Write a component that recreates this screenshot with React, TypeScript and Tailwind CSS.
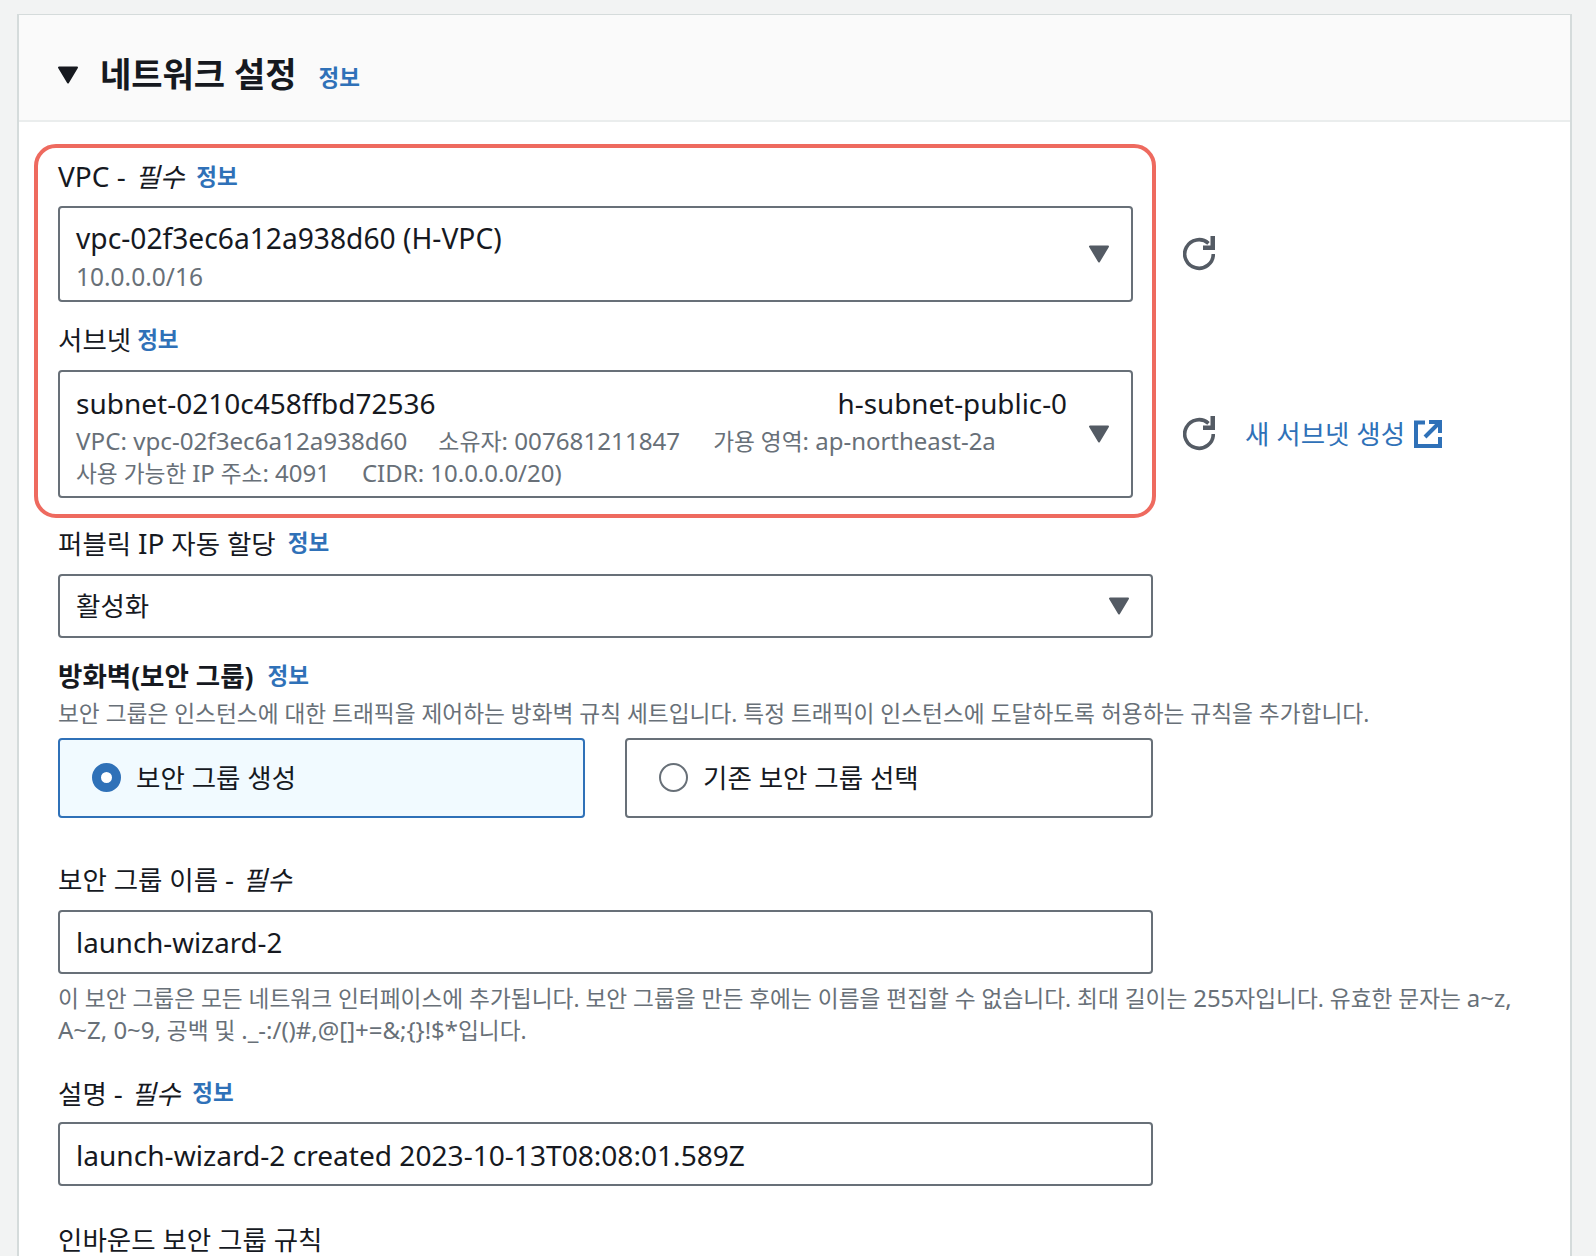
import { ReactNode } from 'react';

// latin runs are a little larger than the hangul around them in the original
const L = ({ children }: { children: ReactNode }) => <span className="text-[1.056em]">{children}</span>;

const Info = ({ className = '' }: { className?: string }) => (
  <span className={`font-bold text-[#2f71b8] text-[22.5px] leading-[32px] ${className}`}>정보</span>
);

const Caret = ({ dark = false }: { dark?: boolean }) => (
  <svg viewBox="0 0 22 20" className="w-[22px] h-[20px] shrink-0">
    <path
      d="M2 2.5h18L11 17.5z"
      fill={dark ? '#16191f' : '#545b64'}
      stroke={dark ? '#16191f' : '#545b64'}
      strokeWidth="2"
      strokeLinejoin="round"
    />
  </svg>
);

const Refresh = () => (
  <svg viewBox="0 0 32 36" className="w-[32px] h-[36px] shrink-0" fill="none">
    <path d="M30.300 18A14.300 14.300 0 1 1 25.500 7.300" stroke="#545b64" strokeWidth="3.600" />
    <path d="M32 0v14H20V9.500h7.500V0z" fill="#545b64" />
  </svg>
);

const ExternalLink = () => (
  <svg viewBox="0 0 28 28" className="w-[28px] h-[28px] shrink-0" fill="none" stroke="#2f71b8" strokeWidth="4">
    <path d="M11 2.500H2v23.500h24v-9" />
    <path d="M15 2h11v11" />
    <path d="M25 3L11 17" />
  </svg>
);

const Box = ({ className = '', children }: { className?: string; children: ReactNode }) => (
  <div className={`border-2 border-[#687078] rounded-[4px] bg-white px-[16px] ${className}`}>{children}</div>
);

export default function App() {
  return (
    <div
      className="h-[1256px] overflow-hidden bg-[#f2f3f3] pt-[14px] pl-[17px] pr-[24px] text-[#16191f] text-[26.5px] leading-[38px]"
      style={{ fontFamily: '"Noto Sans", "Noto Sans CJK KR", sans-serif' }}
    >
      <div className="bg-white border-x-2 border-t border-[#d5dbdb] h-[1300px]">
        {/* Header */}
        <div className="h-[107px] bg-[#fafafa] border-b-2 border-[#eaeded] flex items-center pl-[38px] pt-[14px]">
          <Caret dark />
          <h2 className="ml-[21px] font-bold text-[34px] leading-[44px] mb-[2px]">네트워크 설정</h2>
          <Info className="ml-[22px] mt-[6px]" />
        </div>

        <div className="relative pl-[39px] pt-[36px]">
          {/* highlight drawn over the form */}
          <div className="absolute left-[15px] top-[22px] w-[1122px] h-[374px] border-[4px] border-[#ee6a5f] rounded-[22px] pointer-events-none" />

          <div className="w-[1096px]">
            <div className="flex items-center gap-[12px] h-[38px]">
              <span className="-mt-[2px]">
                <L>VPC -</L> <i className="ml-[3px]">필수</i>
              </span>
              <Info />
            </div>
            <div className="mt-[10px] flex items-center w-[1176px]">
              <Box className="w-[1075px] h-[96px] flex items-center justify-between pr-[21px]">
                <div className="pt-[4px]">
                  <div className="text-[28.2px] leading-[40px]">vpc-02f3ec6a12a938d60 (H-VPC)</div>
                  <div className="text-[24.5px] leading-[37px] text-[#687078]">10.0.0.0/16</div>
                </div>
                <Caret />
              </Box>
              <div className="ml-[50px]">
                <Refresh />
              </div>
            </div>

            <div className="mt-[19px] flex items-center gap-[6px] h-[38px]">
              <span>서브넷</span>
              <Info />
            </div>
            <div className="mt-[11px] flex items-center w-[1500px]">
              <Box className="w-[1075px] h-[128px] flex items-center justify-between pr-[21px]">
                <div className="w-[991px] pt-[3px]">
                  <div className="flex justify-between text-[28px] leading-[40px]">
                    <span>subnet-0210c458ffbd72536</span>
                    <span className="text-[27.8px]">h-subnet-public-0</span>
                  </div>
                  <div className="mt-[2px] text-[22.9px] leading-[32px] text-[#687078] flex gap-[31px]">
                    <span>
                      <L>VPC: vpc-02f3ec6a12a938d60</L>
                    </span>
                    <span>
                      소유자<L>: 007681211847</L>
                    </span>
                    <span className="ml-[2px] text-[22.7px]">
                      가용 영역<L>: ap-northeast-2a</L>
                    </span>
                  </div>
                  <div className="-mt-[1px] text-[22.7px] leading-[31px] text-[#687078] flex gap-[32px]">
                    <span>
                      사용 가능한 <L>IP</L> 주소<L>: 4091</L>
                    </span>
                    <span>
                      <L>CIDR: 10.0.0.0/20)</L>
                    </span>
                  </div>
                </div>
                <Caret />
              </Box>
              <div className="ml-[50px]">
                <Refresh />
              </div>
              <div className="ml-[30px] flex items-center gap-[9px] text-[#2f71b8]">
                <span>새 서브넷 생성</span>
                <ExternalLink />
              </div>
            </div>
          </div>

          <div className="mt-[26px] flex items-center gap-[12px] h-[38px]">
            <span>
              퍼블릭 <L>IP</L> 자동 할당
            </span>
            <Info />
          </div>
          <Box className="mt-[12px] w-[1095px] h-[64px] flex items-center justify-between pr-[21px]">
            <span>활성화</span>
            <Caret />
          </Box>

          <div className="mt-[19px] flex items-center gap-[14px] h-[38px]">
            <span className="font-bold">방화벽(보안 그룹)</span>
            <Info />
          </div>
          <div className="mt-[2px] text-[22.7px] leading-[34px] text-[#687078] whitespace-nowrap">
            보안 그룹은 인스턴스에 대한 트래픽을 제어하는 방화벽 규칙 세트입니다. 특정 트래픽이 인스턴스에 도달하도록 허용하는 규칙을 추가합니다.
          </div>
          <div className="mt-[7px] w-[1095px] grid grid-cols-[527px_528px] gap-[40px]">
            <div className="h-[80px] border-2 border-[#2f71b8] bg-[#f1faff] rounded-[4px] flex items-center pl-[32px] gap-[15px]">
              <span className="w-[29px] h-[29px] rounded-full border-[9px] border-[#2f71b8] bg-white -mt-[1px]" />
              <span className="-mt-[1px]">보안 그룹 생성</span>
            </div>
            <div className="h-[80px] border-2 border-[#687078] rounded-[4px] flex items-center pl-[32px] gap-[15px]">
              <span className="w-[29px] h-[29px] rounded-full border-2 border-[#687078] bg-white -mt-[1px]" />
              <span className="-mt-[1px]">기존 보안 그룹 선택</span>
            </div>
          </div>

          <div className="mt-[42px] h-[38px]">
            보안 그룹 이름 <L>-</L> <i className="ml-[2px]">필수</i>
          </div>
          <Box className="mt-[12px] w-[1095px] h-[64px] flex items-center">
            <span className="text-[27.7px]">launch-wizard-2</span>
          </Box>
          <div className="mt-[8px] w-[1480px] text-[22.7px] leading-[31px] text-[#687078]">
            이 보안 그룹은 모든 네트워크 인터페이스에 추가됩니다. 보안 그룹을 만든 후에는 이름을 편집할 수 없습니다. 최대 길이는 <L>255</L>자입니다. 유효한 문자는 <L>a~z, A~Z, 0~9,</L> 공백 및 <L>._-:/()#,@[]+=&amp;;{'{}'}!$*</L>입니다.
          </div>

          <div className="mt-[28px] flex items-center gap-[12px] h-[38px]">
            <span>
              설명 <L>-</L> <i className="ml-[2px]">필수</i>
            </span>
            <Info />
          </div>
          <Box className="mt-[10px] w-[1095px] h-[64px] flex items-center">
            <span className="text-[28.1px] pt-[2px]">launch-wizard-2 created 2023-10-13T08:08:01.589Z</span>
          </Box>

          <div className="mt-[38px] leading-[32px]">인바운드 보안 그룹 규칙</div>
        </div>
      </div>
    </div>
  );
}
